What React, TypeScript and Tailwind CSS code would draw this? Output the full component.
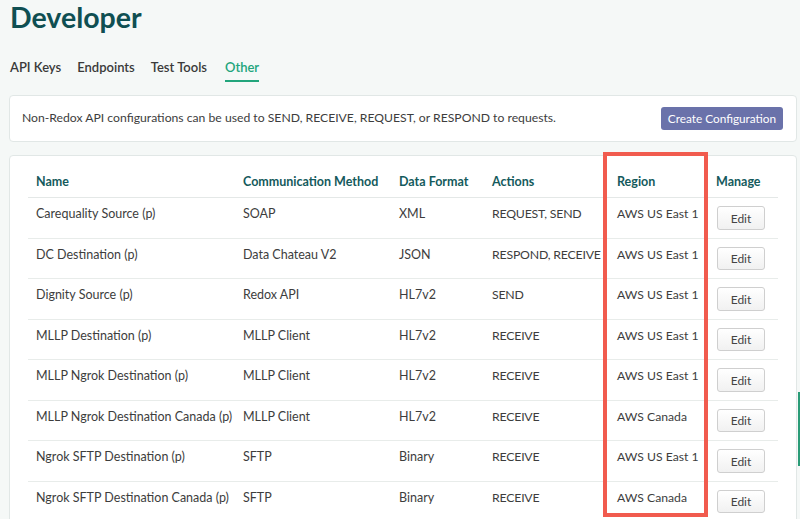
import React from 'react';

// Non-Redox API configurations table
const configs = [
  { name: 'Carequality Source (p)', method: 'SOAP', format: 'XML', actions: 'REQUEST, SEND', region: 'AWS US East 1' },
  { name: 'DC Destination (p)', method: 'Data Chateau V2', format: 'JSON', actions: 'RESPOND, RECEIVE', region: 'AWS US East 1' },
  { name: 'Dignity Source (p)', method: 'Redox API', format: 'HL7v2', actions: 'SEND', region: 'AWS US East 1' },
  { name: 'MLLP Destination (p)', method: 'MLLP Client', format: 'HL7v2', actions: 'RECEIVE', region: 'AWS US East 1' },
  { name: 'MLLP Ngrok Destination (p)', method: 'MLLP Client', format: 'HL7v2', actions: 'RECEIVE', region: 'AWS US East 1' },
  { name: 'MLLP Ngrok Destination Canada (p)', method: 'MLLP Client', format: 'HL7v2', actions: 'RECEIVE', region: 'AWS Canada' },
  { name: 'Ngrok SFTP Destination (p)', method: 'SFTP', format: 'Binary', actions: 'RECEIVE', region: 'AWS US East 1' },
  { name: 'Ngrok SFTP Destination Canada (p)', method: 'SFTP', format: 'Binary', actions: 'RECEIVE', region: 'AWS Canada' },
];

const tabs = ['API Keys', 'Endpoints', 'Test Tools', 'Other'];

const App: React.FC = () => {
  return (
    <div className="relative min-h-screen bg-[#f5f8f7] pl-[9px] pr-[3px] text-[#3d3d3d] font-['Lato',sans-serif] overflow-hidden">
      {/* Title */}
      <h1 className="pt-[2px] text-[28.5px] leading-[30px] font-bold text-[#0f4f52] pl-[1px]">Developer</h1>

      {/* Tabs */}
      <div className="mt-[26px] flex gap-[16px] pl-[1px] text-[13px] leading-[18px] font-semibold">
        {tabs.map(tab => (
          <div
            key={tab}
            className={
              tab === 'Other'
                ? 'ml-[2px] pb-[4px] border-b-2 border-[#22a57c] text-[#22a57c]'
                : 'pb-[4px] border-b-2 border-transparent text-[#3a3a3a]'
            }
          >
            {tab}
          </div>
        ))}
      </div>

      {/* Info card */}
      <div className="mt-[13px] h-[47px] flex items-center justify-between bg-white border border-[#e1e7e6] rounded-[4px] pl-[12px] pr-[13px]">
        <p className="text-[12.2px] text-[#3d3d3d]">
          Non-Redox API configurations can be used to SEND, RECEIVE, REQUEST, or RESPOND to requests.
        </p>
        <button className="h-[23px] w-[122px] bg-[#6a72aa] text-white text-[11.8px] rounded-[3px]">
          Create Configuration
        </button>
      </div>

      {/* Table card */}
      <div className="mt-[13px] bg-white border border-[#e1e7e6] rounded-[4px] px-[18px] pt-[10px]">
        <table className="w-[750px] table-fixed border-collapse text-[12.5px]">
          <colgroup>
            <col className="w-[207px]" />
            <col className="w-[156px]" />
            <col className="w-[93px]" />
            <col className="w-[125px]" />
            <col className="w-[99px]" />
            <col className="w-[70px]" />
          </colgroup>
          <thead>
            <tr className="border-b border-[#e4e8e7] text-left text-[#145a5c] font-bold">
              <th className="px-[8px] pt-[8px] pb-[7px] leading-[16px]">Name</th>
              <th className="px-[8px] pt-[8px] pb-[7px] leading-[16px]">Communication Method</th>
              <th className="px-[8px] pt-[8px] pb-[7px] leading-[16px]">Data Format</th>
              <th className="px-[8px] pt-[8px] pb-[7px] leading-[16px]">Actions</th>
              <th className="px-[8px] pt-[8px] pb-[7px] leading-[16px]">Region</th>
              <th className="px-[8px] pt-[8px] pb-[7px] leading-[16px]">Manage</th>
            </tr>
          </thead>
          <tbody>
            {configs.map(c => (
              <tr key={c.name} className="border-b border-[#e8ecea] align-top">
                <td className="px-[8px] pt-[8px] leading-[16px] whitespace-nowrap">{c.name}</td>
                <td className="px-[8px] pt-[8px] leading-[16px]">{c.method}</td>
                <td className="px-[8px] pt-[8px] leading-[16px]">{c.format}</td>
                <td className="px-[8px] pt-[8px] leading-[16px] text-[12.3px] tracking-[-0.2px] whitespace-nowrap">{c.actions}</td>
                <td className="px-[8px] pt-[8px] leading-[16px] text-[12.2px] whitespace-nowrap">{c.region}</td>
                <td className="pl-[9px] py-[8px]">
                  <button className="h-[23.5px] w-[48px] pt-[2px] bg-gradient-to-b from-white to-[#f1f1f1] border border-[#cfcfcf] rounded-[3px] text-[12px] text-[#444]">
                    Edit
                  </button>
                </td>
              </tr>
            ))}
          </tbody>
        </table>
      </div>

      {/* Annotation box around Region column */}
      <div className="absolute left-[603px] top-[152px] w-[105px] h-[365px] border-[4px] border-[#f15b4e] pointer-events-none" />

      {/* Scroll indicator at the right edge */}
      <div className="absolute right-0 top-[392px] w-[2px] h-[74px] bg-[#2a9c77]" />
    </div>
  );
};

export default App;
